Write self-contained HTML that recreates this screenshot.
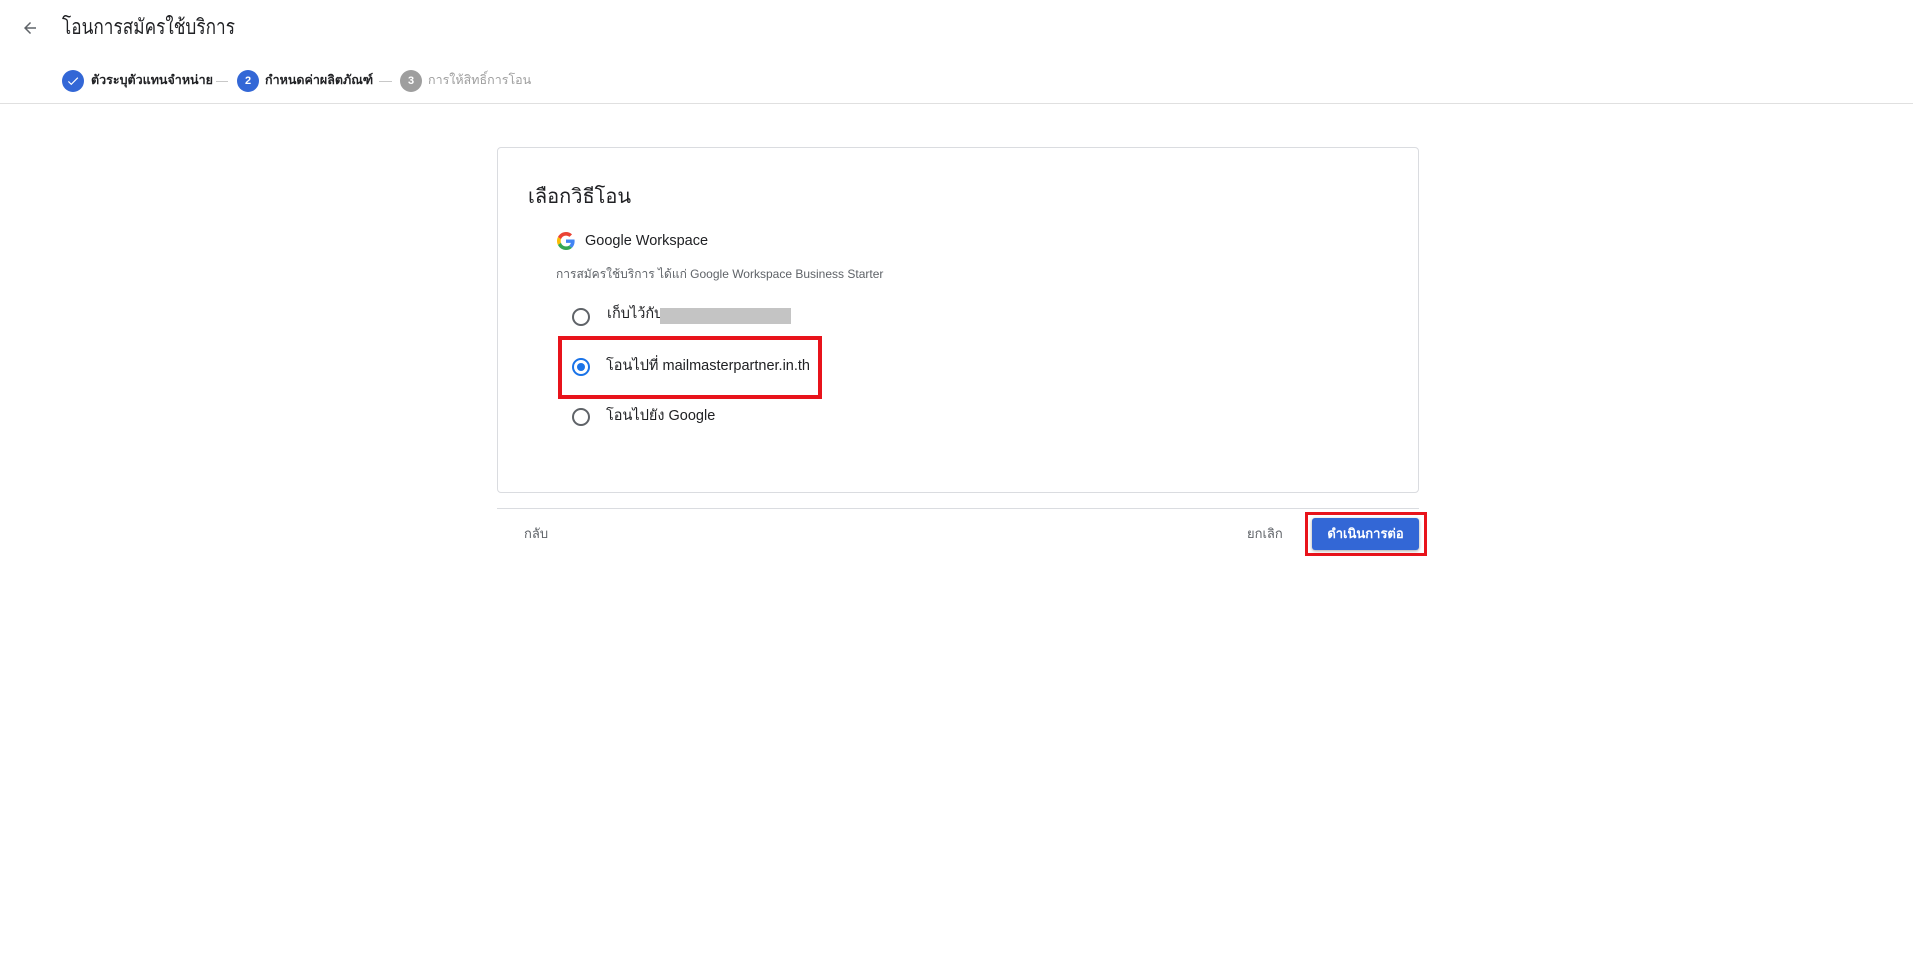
<!DOCTYPE html>
<html><head><meta charset="utf-8"><style>
*{box-sizing:border-box;margin:0;padding:0}
body{width:1913px;height:957px;background:#fff;font-family:"Liberation Sans","Noto Sans CJK SC",sans-serif;color:#202124;position:relative;overflow:hidden}
.a{position:absolute;white-space:nowrap}
.circ{position:absolute;width:22px;height:22px;border-radius:50%;color:#fff;font-size:11px;font-weight:bold;text-align:center;line-height:22px}
.line{position:absolute;height:1px;background:#c8c8c8;top:81px}
.st{position:absolute;top:73px;font-size:12.5px;font-weight:bold;line-height:15px}
.radio{position:absolute;width:18px;height:18px;border:2px solid #5f6368;border-radius:50%}
.rt{position:absolute;font-size:14.5px;line-height:18px}
</style></head><body>
<svg class="a" style="left:21px;top:19px" width="18" height="18" viewBox="0 0 24 24"><path d="M20 11H7.83l5.59-5.59L12 4l-8 8 8 8 1.41-1.41L7.83 13H20v-2z" fill="#5f6368"/></svg>
<div class="a" style="left:62px;top:14px;font-size:21px;line-height:28px;transform:scaleX(0.82);transform-origin:left">โอนการสมัครใช้บริการ</div>

<div class="circ" style="left:62px;top:70px;background:#3367d6"><svg width="14" height="14" viewBox="0 0 24 24" style="margin-top:4px"><path d="M9 16.2L4.8 12l-1.4 1.4L9 19 21 7l-1.4-1.4L9 16.2z" fill="#fff"/></svg></div>
<div class="st" style="left:91px">ตัวระบุตัวแทนจำหน่าย</div>
<div class="line" style="left:216px;width:12px"></div>
<div class="circ" style="left:237px;top:70px;background:#3367d6">2</div>
<div class="st" style="left:265px">กำหนดค่าผลิตภัณฑ์</div>
<div class="line" style="left:379px;width:13px"></div>
<div class="circ" style="left:400px;top:70px;background:#9e9e9e">3</div>
<div class="st" style="left:428px;color:#9e9e9e;font-weight:normal">การให้สิทธิ์การโอน</div>
<div class="a" style="left:0;top:103px;width:1913px;height:1px;background:#e0e0e0"></div>

<div class="a" style="left:497px;top:147px;width:922px;height:346px;border:1px solid #dadce0;border-radius:4px"></div>
<div class="a" style="left:528px;top:184px;font-size:20px;line-height:26px">เลือกวิธีโอน</div>
<svg class="a" style="left:557px;top:232px" width="18" height="18" viewBox="0 0 48 48"><path fill="#EA4335" d="M24 9.5c3.54 0 6.71 1.22 9.21 3.6l6.85-6.85C35.9 2.38 30.470 0 24 0 14.62 0 6.51 5.38 2.56 13.22l7.98 6.19C12.43 13.72 17.74 9.5 24 9.5z"/><path fill="#4285F4" d="M46.98 24.55c0-1.57-.15-3.09-.38-4.550H24v9.02h12.94c-.58 2.96-2.26 5.48-4.78 7.18l7.73 6c4.51-4.18 7.09-10.36 7.09-17.65z"/><path fill="#FBBC05" d="M10.53 28.59c-.48-1.45-.76-2.99-.76-4.59s.27-3.14.76-4.59l-7.98-6.19C.92 16.46 0 20.12 0 24c0 3.88.92 7.54 2.56 10.78l7.97-6.19z"/><path fill="#34A853" d="M24 48c6.48 0 11.93-2.13 15.89-5.81l-7.73-6c-2.15 1.45-4.92 2.3-8.16 2.3-6.26 0-11.57-4.22-13.470-9.910l-7.98 6.19C6.51 42.62 14.62 48 24 48z"/></svg>
<div class="a" style="left:585px;top:232px;font-size:14.5px;line-height:18px">Google Workspace</div>
<div class="a" style="left:556px;top:267px;font-size:12px;line-height:15px;color:#5f6368">การสมัครใช้บริการ ได้แก่ Google Workspace Business Starter</div>

<div class="radio" style="left:572px;top:308px"></div>
<div class="rt" style="left:607px;top:305px">เก็บไว้กับ</div>
<div class="a" style="left:660px;top:308px;width:131px;height:16px;background:#c4c4c4"></div>

<div class="a" style="left:558px;top:336px;width:264px;height:63px;border:4px solid #e8131b"></div>
<div class="radio" style="left:572px;top:358px;border-color:#1a73e8"><div style="position:absolute;left:3px;top:3px;width:8px;height:8px;border-radius:50%;background:#1a73e8"></div></div>
<div class="rt" style="left:606px;top:357px">โอนไปที่ mailmasterpartner.in.th</div>

<div class="radio" style="left:572px;top:408px"></div>
<div class="rt" style="left:606px;top:407px">โอนไปยัง Google</div>

<div class="a" style="left:497px;top:508px;width:922px;height:1px;background:#dadce0"></div>
<div class="a" style="left:524px;top:525px;font-size:13px;line-height:17px;color:#5f6368">กลับ</div>
<div class="a" style="left:1247px;top:525px;font-size:13px;line-height:17px;color:#5f6368">ยกเลิก</div>
<div class="a" style="left:1305px;top:512px;width:122px;height:44px;border:3px solid #e8131b"></div>
<div class="a" style="left:1312px;top:518px;width:107px;height:32px;background:#3367d6;border-radius:3px;box-shadow:0 1px 3px rgba(0,0,0,.35);color:#fff;font-size:13px;font-weight:bold;text-align:center;line-height:32px">ดำเนินการต่อ</div>
</body></html>
